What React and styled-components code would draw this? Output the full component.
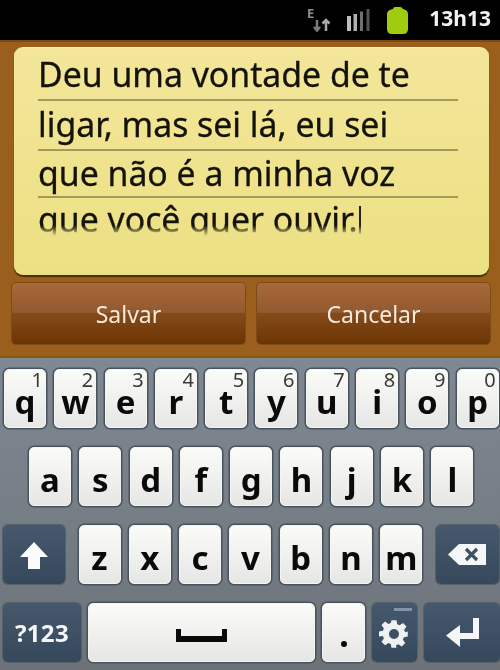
import styled, { createGlobalStyle } from 'styled-components';

const rowOne = [
    ['q', '1'], ['w', '2'], ['e', '3'], ['r', '4'], ['t', '5'],
    ['y', '6'], ['u', '7'], ['i', '8'], ['o', '9'], ['p', '0'],
];
const rowTwo = ['a', 's', 'd', 'f', 'g', 'h', 'j', 'k', 'l'];
const rowThree = ['z', 'x', 'c', 'v', 'b', 'n', 'm'];
const noteLines = [
    { text: 'Deu uma vontade de te', height: 51 },
    { text: 'ligar, mas sei lá, eu sei', height: 50 },
    { text: 'que não é a minha voz', height: 47 },
];

const GlobalStyle = createGlobalStyle`
    html, body {
        margin: 0;
        padding: 0;
        background: #000;
    }
    * {
        box-sizing: border-box;
    }
`;

const Screen = styled.div`
    width: 500px;
    height: 670px;
    display: flex;
    flex-direction: column;
    overflow: hidden;
    font-family: "Noto Sans", "Open Sans", sans-serif;
    filter: blur(0.5px);
`;

const StatusBar = styled.div`
    height: 40px;
    flex: none;
    background: #000;
    display: flex;
    align-items: center;
    justify-content: flex-end;
    padding-right: 9px;
`;

const StatusIcon = styled.svg`
    display: block;
    flex: none;
    overflow: visible;
    margin-right: ${({ $gap }) => $gap}px;
`;

const Clock = styled.span`
    color: #f2f2f2;
    font-size: 21px;
    font-weight: 700;
    line-height: 1;
    margin-top: -3px;
`;

const NotePanel = styled.div`
    height: 318px;
    flex: none;
    background: #9a5f1c;
    border-top: 2px solid #7a4a14;
    padding: 5px 9px 0 11px;
    display: flex;
    flex-direction: column;
    border-bottom: 2px solid #8a5414;
`;

const Note = styled.div`
    height: 228px;
    flex: none;
    margin: 0 2px 0 3px;
    padding: 2px 31px 0 24px;
    background: linear-gradient(#f3e69a, #ece083);
    border-top: 1px solid #f9f2c2;
    border-radius: 9px;
    box-shadow: 0 2px 1px #4a2c08;
    overflow: hidden;
`;

const NoteLine = styled.div`
    height: ${({ $height }) => $height}px;
    display: flex;
    align-items: center;
    color: #14130a;
    font-size: 33.8px;
    line-height: 1;
    white-space: nowrap;
    -webkit-text-stroke: 0.3px #14130a;
    border-bottom: 2px solid #a49a5c;
`;

const LastLine = styled(NoteLine)`
    border-bottom: none;
    padding-top: 6px;
    overflow: hidden;
    -webkit-mask-image: linear-gradient(#000 72%, transparent 100%);
    mask-image: linear-gradient(#000 72%, transparent 100%);
`;

const Caret = styled.span`
    width: 2px;
    height: 28px;
    background: #222;
    margin-left: 1px;
`;

const ButtonRow = styled.div`
    display: flex;
    gap: 10px;
    margin-top: 7px;
`;

const ActionButton = styled.div`
    flex: 1;
    height: 63px;
    display: flex;
    align-items: center;
    justify-content: center;
    color: #f4e9dd;
    font-size: 23px;
    border-radius: 5px;
    border: 1px solid #7d4b14;
    background: linear-gradient(#a9693a 0%, #915a30 48%, #864a1a 50%, #6b3503 100%);
`;

const Keyboard = styled.div`
    flex: 1;
    display: flex;
    flex-direction: column;
    background: linear-gradient(#7f8993, #6c7278);
    padding: 11px 0 0;
    gap: 19px;
`;

const KeyRow = styled.div`
    display: flex;
    height: 59px;
    gap: ${({ $gap }) => $gap}px;
    padding-left: ${({ $left }) => $left}px;
`;

const LetterGroup = styled.div`
    display: flex;
    gap: 8.3px;
`;

const BaseKey = styled.div`
    position: relative;
    flex: none;
    height: 100%;
    border-radius: 5px;
    display: flex;
    align-items: center;
    justify-content: center;
`;

const LetterKey = styled(BaseKey)`
    width: ${({ $width }) => $width || 42}px;
    color: #0a0a0a;
    font-size: 33px;
    font-weight: 700;
    background: linear-gradient(#fbfbf8, #e6e7e5);
    border: 1px solid #f4f4f2;
    box-shadow: 0 0 0 1.5px #48535e;
    padding-top: 6px;
`;

const SideKey = styled(BaseKey)`
    width: ${({ $width }) => $width}px;
    color: #f4f5f6;
    background: linear-gradient(#46586c, #36485c);
    box-shadow: 0 0 0 1px #55606a;
`;

const Hint = styled.span`
    position: absolute;
    top: 0;
    right: 2px;
    color: #3a3a3a;
    font-size: 20px;
    font-weight: 400;
    line-height: 1;
`;

const SymbolLabel = styled.span`
    font-size: 24px;
    font-weight: 700;
    letter-spacing: 0.3px;
`;

const MenuDash = styled.span`
    position: absolute;
    top: 5px;
    right: 5px;
    width: 18px;
    height: 3px;
    background: #8295a8;
`;

const KeySvg = styled.svg`
    display: block;
`;

const GearSvg = styled(KeySvg)`
    margin: 3px 1px 0 0;
`;

const Dot = styled.span`
    position: absolute;
    bottom: 14px;
    left: 50%;
    width: 6px;
    height: 6px;
    margin-left: -3px;
    border-radius: 50%;
    background: #0a0a0a;
`;

const DataIcon = () => (
    <StatusIcon width="24" height="24" viewBox="0 0 24 24" $gap={16}>
        <text x="0" y="10" fontFamily="Noto Sans" fontWeight="700" fontSize="13" fill="#8f8f8f">E</text>
        <path d="M10 12v10M7 19l3 3.500 3-3.500" stroke="#7a7a7a" strokeWidth="2.500" fill="none" />
        <path d="M19 23V12M15.500 15.500 19 12l3.500 3.500" stroke="#a8a8a8" strokeWidth="2.500" fill="none" />
    </StatusIcon>
);

const SignalIcon = () => (
    <StatusIcon width="24" height="22" viewBox="0 0 24 22" $gap={16}>
        <rect x="0" y="7" width="4" height="15" fill="#bdbdbd" />
        <rect x="6.500" y="5" width="3.500" height="17" fill="#b0b0b0" />
        <rect x="13" y="2.500" width="3" height="19.500" fill="#707070" />
        <rect x="19.500" y="0" width="3" height="22" fill="#555" />
    </StatusIcon>
);

const BatteryIcon = () => (
    <StatusIcon width="21" height="27" viewBox="0 0 21 27" $gap={21}>
        <path d="M6 2q0-2 2-2h5q2 0 3 2 5 1 5 5v15q0 5-5 5H5q-5 0-5-5V7q0-4 6-5z" fill="#9fcc0e" />
    </StatusIcon>
);

const ShiftIcon = () => (
    <KeySvg width="30" height="30" viewBox="0 0 30 30">
        <path d="M15 2 29 17H21V29H9V17H1z" fill="#fbfbfb" />
    </KeySvg>
);

const BackspaceIcon = () => (
    <KeySvg width="38" height="21" viewBox="0 0 38 21">
        <path d="M11 0H38V21H11L0 10.500z" fill="#f5f6f7" />
        <path d="M18 5l11 11M29 5 18 16" stroke="#3e5064" strokeWidth="3.200" />
    </KeySvg>
);

const GearIcon = () => (
    <GearSvg width="30" height="30" viewBox="0 0 24 24">
        <path
            fill="#eef0f2"
            fillRule="evenodd"
            d="M10 1h4l.6 3.200 1.900.8 2.700-1.900 2.800 2.800-1.900 2.700.8 1.900L23 10v4l-3.100.6-.8 1.900 1.900 2.700-2.800 2.800-2.700-1.900-1.900.8L14 23h-4l-.6-3.100-1.900-.8-2.700 1.900L2 18.200l1.900-2.700-.8-1.900L0 14v-4l3.100-.6.8-1.900L2 4.800 4.800 2l2.700 1.900 1.900-.8zM12 8a4 4 0 1 0 0 8 4 4 0 0 0 0-8z"
        />
    </GearSvg>
);

const EnterIcon = () => (
    <KeySvg width="33" height="29" viewBox="0 0 33 29">
        <path d="M27 0h6v21H14v8L0 17.500 14 7v8h13z" fill="#f5f6f7" />
    </KeySvg>
);

const SpaceIcon = () => (
    <KeySvg width="51" height="13" viewBox="0 0 51 13">
        <path d="M0 0h5v7h41V0h5v13H0z" fill="#0a0a0a" />
    </KeySvg>
);

const App = () => {
    return (
        <Screen>
            <GlobalStyle />
            <StatusBar>
                <DataIcon />
                <SignalIcon />
                <BatteryIcon />
                <Clock>13h13</Clock>
            </StatusBar>
            <NotePanel>
                <Note>
                    {noteLines.map((line) => (
                        <NoteLine key={line.text} $height={line.height}>{line.text}</NoteLine>
                    ))}
                    <LastLine $height={38}>que você quer ouvir.<Caret /></LastLine>
                </Note>
                <ButtonRow>
                    <ActionButton>Salvar</ActionButton>
                    <ActionButton>Cancelar</ActionButton>
                </ButtonRow>
            </NotePanel>
            <Keyboard>
                <KeyRow $gap={8.3} $left={4}>
                    {rowOne.map(([letter, hint]) => (
                        <LetterKey key={letter}>
                            {letter}
                            <Hint>{hint}</Hint>
                        </LetterKey>
                    ))}
                </KeyRow>
                <KeyRow $gap={8.3} $left={29}>
                    {rowTwo.map((letter) => (
                        <LetterKey key={letter}>{letter}</LetterKey>
                    ))}
                </KeyRow>
                <KeyRow $gap={13.5} $left={3}>
                    <SideKey $width={62}><ShiftIcon /></SideKey>
                    <LetterGroup>
                        {rowThree.map((letter) => (
                            <LetterKey key={letter}>{letter}</LetterKey>
                        ))}
                    </LetterGroup>
                    <SideKey $width={63}><BackspaceIcon /></SideKey>
                </KeyRow>
                <KeyRow $gap={7} $left={3}>
                    <SideKey $width={78}><SymbolLabel>?123</SymbolLabel></SideKey>
                    <LetterKey $width={227}><SpaceIcon /></LetterKey>
                    <LetterKey $width={43}><Dot /></LetterKey>
                    <SideKey $width={45}>
                        <MenuDash />
                        <GearIcon />
                    </SideKey>
                    <SideKey $width={76}><EnterIcon /></SideKey>
                </KeyRow>
            </Keyboard>
        </Screen>
    );
};

export default App;
